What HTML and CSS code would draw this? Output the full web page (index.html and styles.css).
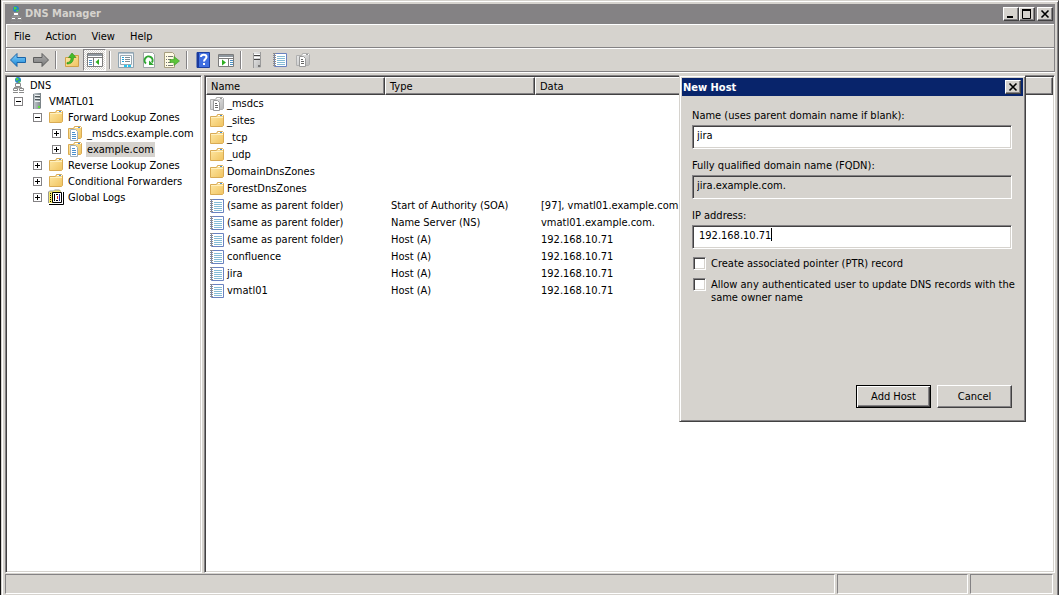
FILE: index.html
```html
<!DOCTYPE html>
<html lang="en">
<head>
    <meta charset="UTF-8">
    <meta name="viewport" content="width=device-width, initial-scale=1.0">
    <title>DNS Manager</title>
    <link rel="stylesheet" href="styles.css">
</head>
<body>
    <!-- Icon set -->
    <svg class="sprite" aria-hidden="true">
        <linearGradient id="gFolder" x1="0" y1="0" x2="1" y2="1"><stop offset="0" stop-color="#ffe9a6"/><stop offset="1" stop-color="#f0c35f"/></linearGradient>
        <linearGradient id="gGray" x1="0" y1="0" x2="1" y2="1"><stop offset="0" stop-color="#ededed"/><stop offset="1" stop-color="#b8b8b8"/></linearGradient>
        <linearGradient id="gBlue" x1="0" y1="0" x2="0" y2="1"><stop offset="0" stop-color="#8ad4fb"/><stop offset="1" stop-color="#1583d6"/></linearGradient>
        <linearGradient id="gArrow" x1="0" y1="0" x2="0" y2="1"><stop offset="0" stop-color="#b0b0b0"/><stop offset="1" stop-color="#777"/></linearGradient>
        <linearGradient id="gServer" x1="0" y1="0" x2="1" y2="0"><stop offset="0" stop-color="#c9d0d4"/><stop offset="1" stop-color="#7d878c"/></linearGradient>

        <symbol id="dns" viewBox="0 0 16 16">
            <circle cx="8" cy="3" r="3" fill="#2585c9"/>
            <path d="M6 1h2l1 1.500-3 1.500zM8 4.500l2.500-1v1.500L8.500 6z" fill="#4fd03e"/>
            <path d="M8 5.500v6" stroke="#888"/>
            <path d="M5.500 6.500h5v3h-5z" fill="#fff" stroke="#8a8a8a"/>
            <path d="M4 10.500h8" stroke="#999"/>
            <path d="M3.500 11.500h4v2h-4zM9.500 11.500h4v2h-4z" fill="#fff" stroke="#8a8a8a"/>
            <path d="M3 15.500h5M9 15.500h5" stroke="#8a8a8a"/>
        </symbol>
        <symbol id="server" viewBox="0 0 16 16">
            <path d="M4 1l2-1h6v15l-1 1H4z" fill="url(#gServer)"/>
            <path d="M4.500 1v15M11.500 0v15" stroke="#7b8488"/>
            <path d="M6 3.500h5M6 6.500h5" stroke="#4c5559"/>
            <path d="M6 2.500h5M6 5.500h5M6 8.500h5" stroke="#eef2f3"/>
            <path d="M9 13h2v2H9z" fill="#5fe33c"/>
        </symbol>
        <symbol id="server-gray" viewBox="0 0 16 16">
            <path d="M4 1l2-1h6v15l-1 1H4z" fill="url(#gGray)"/>
            <path d="M4.500 1v15M11.500 0v15" stroke="#9a9a9a"/>
            <path d="M5 3.500h6M5 7.500h6" stroke="#444"/>
            <path d="M5 2.500h6M5 5.500h6" stroke="#fff"/>
            <path d="M9 13h2v2H9z" fill="#777"/>
        </symbol>
        <symbol id="folder" viewBox="0 0 16 16">
            <path d="M1.500 3.500h6l1-2h5l1 1v10l-1 1h-12z" fill="url(#gFolder)" stroke="#d9ab54"/>
            <path d="M9 2.500h5" stroke="#fff"/><path d="M11 2.500h2" stroke="#4a90dc"/>
            <path d="M2 4.500h12" stroke="#fff0c0"/>
        </symbol>
        <symbol id="zone" viewBox="0 0 16 16">
            <path d="M1.500 3.500h5l1-2h6l1 1v10l-1 1h-12z" fill="url(#gFolder)" stroke="#d9ab54"/>
            <path d="M8 2.500h6" stroke="#fff"/><path d="M11 2.500h2" stroke="#4a90dc"/>
            <path d="M3.500 4.500h5l2 2v9h-7z" fill="#fff" stroke="#9fb0bd"/>
            <path d="M5 7.500h3M5 9.500h4M5 11.500h4M5 13.500h4" stroke="#4a8fce"/>
        </symbol>
        <symbol id="zone-gray" viewBox="0 0 16 16">
            <path d="M1.500 3.500h5l1-2h6l1 1v10l-1 1h-12z" fill="url(#gGray)" stroke="#b0b0b0"/>
            <path d="M8 2.500h6" stroke="#fff"/><path d="M11 2.500h2" stroke="#999"/>
            <path d="M4.500 4.500h4l2 2v8h-6z" fill="#fff" stroke="#999"/>
            <path d="M6 7.500h2M6 9.500h3M6 11.500h3" stroke="#666"/>
        </symbol>
        <symbol id="record" viewBox="0 0 16 16">
            <path d="M2.500 1.500h12v13h-12z" fill="#fff" stroke="#6a82c0"/>
            <path d="M5 4.500h8M5 6.500h8M5 8.500h8M5 10.500h8M5 12.500h8" stroke="#86bcd6"/>
            <path d="M2.500 1v14" stroke="#8c8c8c" stroke-width="3" stroke-dasharray="1 1"/>
        </symbol>
        <symbol id="logs" viewBox="0 0 16 16">
            <path d="M1 3l1-1h4l1-1h5l1 2v11H1z" fill="#f6e96a"/>
            <path d="M.5 14v-11l1-1h4l1-1h5l1 1.500" fill="none" stroke="#999"/>
            <path d="M1 15.500h14.500V3" fill="none" stroke="#000"/>
            <path d="M4.500 3.500h9v10h-9z" fill="#fff" stroke="#000"/>
            <path d="M6.500 5v7M8 5.500h2M8 11.500h2" stroke="#000"/>
            <path d="M9.500 7v3" stroke="#c22"/><path d="M11.500 5v7" stroke="#22a"/>
            <path d="M2.500 4v10" stroke="#000" stroke-dasharray="1 1"/>
        </symbol>
        <symbol id="back" viewBox="0 0 16 16">
            <path d="M.5 8L7 1.500v4h8.500v5H7v4z" fill="url(#gBlue)" stroke="#1c65a8"/>
        </symbol>
        <symbol id="forward" viewBox="0 0 16 16">
            <path d="M15.500 8L9 1.500v4H.5v5H9v4z" fill="url(#gArrow)" stroke="#5d5d5d"/>
        </symbol>
        <symbol id="up" viewBox="0 0 16 16">
            <path d="M1.500 5.500h6l1-2h6v11h-13z" fill="url(#gFolder)" stroke="#d0a048"/>
            <path d="M3 10.500c3 0 4-2 4-5H4.500L8 1l4 4.500H9.500C9.500 10 7 12 3 12z" fill="#43bd2a" stroke="#258b16" stroke-width=".6"/>
        </symbol>
        <symbol id="panes" viewBox="0 0 16 16">
            <path d="M.5 1.500h15v13H.5z" fill="#fff" stroke="#7c7c7c"/>
            <path d="M1 3h14" stroke="#8e979e" stroke-width="2"/><path d="M1 5.500h14M6.500 6v8" stroke="#7c7c7c"/>
            <path d="M2 8.500h3M2 10.500h3M2 12.500h3" stroke="#4b91c4"/>
            <path d="M12 7v6L8.500 10z" fill="#2fae20"/>
        </symbol>
        <symbol id="props" viewBox="0 0 16 16">
            <path d="M.5.500h15v15H.5z" fill="#f5f8fa" stroke="#8fa3b0"/>
            <path d="M1 1.500h14" stroke="#b5c5d1"/>
            <path d="M2.500 3.500h11v9h-11z" fill="#fff" stroke="#9baab3"/>
            <path d="M7 5.500h5M7 7.500h5M7 9.500h5" stroke="#7c8b93"/><path d="M4 5.500h2M4 7.500h2M4 9.500h2" stroke="#22a3dc"/>
            <path d="M6 14h3M10 14h3" stroke="#28c5ee" stroke-width="2"/>
        </symbol>
        <symbol id="refresh" viewBox="0 0 16 16">
            <path d="M2.500.500h9l2 2v13h-11z" fill="#fff" stroke="#a1a5a8"/>
            <path d="M5 11.500A4 4 0 1 1 11 10.500" fill="none" stroke="#30a632" stroke-width="2"/>
            <path d="M8 8.500v4.500h5z" fill="#30a632"/>
        </symbol>
        <symbol id="export" viewBox="0 0 16 16">
            <path d="M.5.500h8l2 2v13H.5z" fill="#fffbe4" stroke="#a79f80"/>
            <path d="M2 4.500h1M4 4.500h5M2 7.500h1M4 7.500h3M2 10.500h1M4 10.500h3M2 13.500h1M4 13.500h5" stroke="#777"/>
            <path d="M6 7.500h4V4.500L15.500 9 10 13.500v-3H6z" fill="#5cc43a" stroke="#3b9323" stroke-width=".6"/>
        </symbol>
        <symbol id="help" viewBox="0 0 16 16">
            <path d="M2 .5h12.500v15H2z" fill="#3f6fe0" stroke="#1b3fa0"/><path d="M3 1v14" stroke="#1c3a9c" stroke-width="2"/>
            <path d="M6 5c0-3 5.500-3 5.500 0 0 2-2.500 2-2.500 4.500" fill="none" stroke="#fff" stroke-width="2"/>
            <path d="M8 11h2v2H8z" fill="#fff"/>
        </symbol>
        <symbol id="action" viewBox="0 0 16 16">
            <path d="M.5 2.500h15v12H.5z" fill="#fff" stroke="#7c7c7c"/>
            <path d="M1 4h14" stroke="#8e979e" stroke-width="2"/><path d="M1 6.500h14M10.500 7v7" stroke="#7c7c7c"/>
            <path d="M12 8.500h3M12 10.500h3M12 12.500h3" stroke="#4b91c4"/>
            <path d="M4 7.500v6L8 10.500z" fill="#2fae20"/>
        </symbol>
        <symbol id="min" viewBox="0 0 12 10"><path d="M2 8h6" stroke="#000" stroke-width="2"/></symbol>
        <symbol id="max" viewBox="0 0 12 10"><path d="M1.500 1h8v8.500h-8z" fill="none" stroke="#000"/><path d="M1 1h9" stroke="#000" stroke-width="2"/></symbol>
        <symbol id="close" viewBox="0 0 12 10"><path d="M2.500 1.500l7 7M9.500 1.500l-7 7" stroke="#000" stroke-width="1.600"/></symbol>
    </svg>

    <div class="window">
        <header class="titlebar">
            <svg class="icon"><use href="#dns"/></svg>
            <h1>DNS Manager</h1>
            <div class="caption-buttons">
                <button class="caption" aria-label="Minimize"><svg><use href="#min"/></svg></button>
                <button class="caption" aria-label="Maximize"><svg><use href="#max"/></svg></button>
                <button class="caption close" aria-label="Close"><svg><use href="#close"/></svg></button>
            </div>
        </header>

        <div class="bars">
            <nav class="menubar">
                <button>File</button>
                <button>Action</button>
                <button>View</button>
                <button>Help</button>
            </nav>
            <div class="toolbar">
                <button aria-label="Back"><svg class="icon"><use href="#back"/></svg></button>
                <button aria-label="Forward"><svg class="icon"><use href="#forward"/></svg></button>
                <span class="sep"></span>
                <button aria-label="Up one level"><svg class="icon"><use href="#up"/></svg></button>
                <button class="pressed" aria-label="Show console tree"><svg class="icon"><use href="#panes"/></svg></button>
                <span class="sep"></span>
                <button aria-label="Properties"><svg class="icon"><use href="#props"/></svg></button>
                <button aria-label="Refresh"><svg class="icon"><use href="#refresh"/></svg></button>
                <button aria-label="Export list"><svg class="icon"><use href="#export"/></svg></button>
                <span class="sep"></span>
                <button aria-label="Help"><svg class="icon"><use href="#help"/></svg></button>
                <button aria-label="Show action pane"><svg class="icon"><use href="#action"/></svg></button>
                <span class="sep"></span>
                <button aria-label="New server"><svg class="icon"><use href="#server-gray"/></svg></button>
                <button aria-label="New record"><svg class="icon"><use href="#record"/></svg></button>
                <button aria-label="New zone"><svg class="icon"><use href="#zone-gray"/></svg></button>
            </div>
        </div>

        <main class="panes">
            <!-- Console tree -->
            <div class="pane tree">
                <div class="node"><svg class="icon"><use href="#dns"/></svg><span>DNS</span></div>
                <ul>
                    <li>
                        <div class="node"><button class="toggle open" aria-label="Collapse"></button><svg class="icon"><use href="#server"/></svg><span>VMATL01</span></div>
                        <ul>
                            <li>
                                <div class="node"><button class="toggle open" aria-label="Collapse"></button><svg class="icon"><use href="#folder"/></svg><span>Forward Lookup Zones</span></div>
                                <ul>
                                    <li class="node"><button class="toggle" aria-label="Expand"></button><svg class="icon"><use href="#zone"/></svg><span>_msdcs.example.com</span></li>
                                    <li class="node"><button class="toggle" aria-label="Expand"></button><svg class="icon"><use href="#zone"/></svg><span class="selected">example.com</span></li>
                                </ul>
                            </li>
                            <li class="node"><button class="toggle" aria-label="Expand"></button><svg class="icon"><use href="#folder"/></svg><span>Reverse Lookup Zones</span></li>
                            <li class="node"><button class="toggle" aria-label="Expand"></button><svg class="icon"><use href="#folder"/></svg><span>Conditional Forwarders</span></li>
                            <li class="node"><button class="toggle" aria-label="Expand"></button><svg class="icon"><use href="#logs"/></svg><span>Global Logs</span></li>
                        </ul>
                    </li>
                </ul>
            </div>

            <!-- Records -->
            <div class="pane list">
                <table>
                    <thead>
                        <tr><th class="col-name">Name</th><th class="col-type">Type</th><th>Data</th></tr>
                    </thead>
                    <tbody>
                        <tr><td><svg class="icon"><use href="#zone-gray"/></svg>_msdcs</td><td></td><td></td></tr>
                        <tr><td><svg class="icon"><use href="#folder"/></svg>_sites</td><td></td><td></td></tr>
                        <tr><td><svg class="icon"><use href="#folder"/></svg>_tcp</td><td></td><td></td></tr>
                        <tr><td><svg class="icon"><use href="#folder"/></svg>_udp</td><td></td><td></td></tr>
                        <tr><td><svg class="icon"><use href="#folder"/></svg>DomainDnsZones</td><td></td><td></td></tr>
                        <tr><td><svg class="icon"><use href="#folder"/></svg>ForestDnsZones</td><td></td><td></td></tr>
                        <tr><td><svg class="icon"><use href="#record"/></svg>(same as parent folder)</td><td>Start of Authority (SOA)</td><td>[97], vmatl01.example.com..</td></tr>
                        <tr><td><svg class="icon"><use href="#record"/></svg>(same as parent folder)</td><td>Name Server (NS)</td><td>vmatl01.example.com.</td></tr>
                        <tr><td><svg class="icon"><use href="#record"/></svg>(same as parent folder)</td><td>Host (A)</td><td>192.168.10.71</td></tr>
                        <tr><td><svg class="icon"><use href="#record"/></svg>confluence</td><td>Host (A)</td><td>192.168.10.71</td></tr>
                        <tr><td><svg class="icon"><use href="#record"/></svg>jira</td><td>Host (A)</td><td>192.168.10.71</td></tr>
                        <tr><td><svg class="icon"><use href="#record"/></svg>vmatl01</td><td>Host (A)</td><td>192.168.10.71</td></tr>
                    </tbody>
                </table>
            </div>
        </main>

        <footer class="statusbar">
            <div class="cell main-cell"></div>
            <div class="cell mid-cell"></div>
            <div class="cell end-cell"></div>
        </footer>

        <!-- New Host dialog -->
        <form class="dialog" role="dialog" aria-labelledby="dialogTitle">
            <div class="dialog-title">
                <h2 id="dialogTitle">New Host</h2>
                <button type="button" class="caption" aria-label="Close"><svg><use href="#close"/></svg></button>
            </div>
            <div class="dialog-body">
                <label for="hostName">Name (uses parent domain name if blank):</label>
                <input type="text" id="hostName" value="jira">
                <label for="fqdn">Fully qualified domain name (FQDN):</label>
                <input type="text" id="fqdn" value="jira.example.com." readonly>
                <label for="ip">IP address:</label>
                <div class="ip-field">
                    <input type="text" id="ip" value="192.168.10.71">
                    <span class="caret"></span>
                </div>
                <div class="check">
                    <input type="checkbox" id="ptr">
                    <label for="ptr">Create associated pointer (PTR) record</label>
                </div>
                <div class="check">
                    <input type="checkbox" id="allow">
                    <label for="allow">Allow any authenticated user to update DNS records with the same owner name</label>
                </div>
                <div class="actions">
                    <button type="button" class="btn default">Add Host</button>
                    <button type="button" class="btn">Cancel</button>
                </div>
            </div>
        </form>
    </div>
</body>
</html>
```

FILE: styles.css
```css
* { box-sizing: border-box; }
body { margin: 0; padding-left: 1px; background: #111; color: #000; font: 11px/13px "DejaVu Sans Condensed", "DejaVu Sans", sans-serif; }
button, input { font: inherit; color: inherit; margin: 0; border-radius: 0; }
h1, h2 { margin: 0; font-size: 11px; line-height: 13px; }
ul { list-style: none; margin: 0; padding: 0; }
.sprite { position: absolute; width: 0; height: 0; }
.icon { width: 16px; height: 16px; flex: none; display: block; }

.window { position: relative; display: flex; flex-direction: column; min-height: 100vh; padding: 3px 3px 1px; background: #d6d3ce; border: 1px solid #d6d3ce; border-right-color: #424142; border-bottom: 0; box-shadow: inset 1px 1px #fff, inset -1px 0 #848284; }

/* Title bar */
.titlebar { display: flex; align-items: center; height: 19px; padding: 0 2px 0 3px; background: #848284; color: #d6d3ce; }
.titlebar h1 { flex: 1; margin-left: 1px; }
.caption-buttons { display: flex; }
.caption { width: 16px; height: 14px; padding: 0; background: #d6d3ce; border: 1px solid; border-color: #fff #424142 #424142 #fff; box-shadow: inset -1px -1px #848284; }
.caption svg { display: block; width: 12px; height: 10px; margin: 0 auto; }
.caption.close { margin-left: 2px; }

/* Menu and toolbar */
.bars { margin-bottom: 3px; padding-top: 1px; border: 1px solid #848284; box-shadow: inset 1px 1px #fff, 0 1px #fff; }
.menubar { display: flex; height: 23px; padding-left: 1px; border-bottom: 1px solid #848284; }
.menubar button { padding: 0 7px; margin-right: 1px; border: 0; background: none; }
.toolbar { display: flex; height: 23px; border-top: 1px solid #fff; }
.toolbar button { display: flex; justify-content: center; align-items: center; width: 23px; height: 22px; padding: 0; border: 0; background: none; }
.toolbar .pressed { border: 1px solid; border-color: #848284 #fff #fff #848284; background: repeating-conic-gradient(#fff 0 25%, #d6d3ce 0 50%) 0 0 / 2px 2px; }
.sep { width: 2px; height: 18px; margin: 2px 3px; border-left: 1px solid #848284; border-right: 1px solid #fff; }

/* Panes */
.panes { flex: 1; display: flex; gap: 2px; }
.pane { padding: 1px; background: #fff; border: 1px solid; border-color: #848284 #fff #fff #848284; box-shadow: inset 1px 1px #424142, inset -1px -1px #d6d3ce; }
.tree { width: 197px; padding-left: 4px; }
.tree ul { padding-left: 19px; }
.tree > ul { padding-left: 4px; }
.node { display: flex; align-items: center; height: 16px; white-space: nowrap; }
.node span { margin-left: 3px; padding: 1px; }
.node .selected { background: #d6d3ce; }
.toggle { width: 9px; height: 9px; margin-right: 6px; padding: 0; border: 1px solid #848284; background: linear-gradient(#000, #000) center / 5px 1px no-repeat, linear-gradient(#000, #000) center / 1px 5px no-repeat #fff; }
.toggle.open { background: linear-gradient(#000, #000) center / 5px 1px no-repeat #fff; }

.list { flex: 1; min-width: 0; }
table { width: 100%; table-layout: fixed; border-collapse: separate; border-spacing: 0; }
th { height: 18px; padding: 0 4px; text-align: left; font-weight: normal; background: #d6d3ce; border: 1px solid; border-color: #fff #424142 #424142 #fff; box-shadow: inset -1px -1px #848284; }
.col-name { width: 179px; }
.col-type { width: 150px; }
td { height: 17px; padding: 0 6px; white-space: nowrap; }
td:first-child { display: flex; align-items: center; gap: 2px; padding-left: 3px; }

/* Status bar */
.statusbar { display: flex; gap: 2px; height: 20px; margin: 1px 2px 0 0; }
.cell { border: 1px solid; border-color: #848284 #fff #fff #848284; }
.main-cell { flex: 1; }
.mid-cell { width: 131px; }
.end-cell { width: 83px; }

/* New Host dialog */
.dialog { position: absolute; top: 74px; right: 32px; width: 347px; padding: 2px; background: #d6d3ce; border: 1px solid; border-color: #d6d3ce #424142 #424142 #d6d3ce; box-shadow: inset 1px 1px #fff, inset -1px -1px #848284; }
.dialog-title { display: flex; align-items: center; justify-content: space-between; height: 18px; padding: 0 2px 0 1px; background: #08246b; color: #fff; }
.dialog-body { display: flex; flex-direction: column; padding: 13px 11px 11px 10px; }
.dialog-body input[type="text"] { width: 100%; height: 24px; margin: 3px 0 10px; padding: 0 4px 3px; outline: 0; background: #fff; border: 1px solid; border-color: #848284 #fff #fff #848284; box-shadow: inset 1px 1px #424142, inset -1px -1px #d6d3ce; }
.dialog-body input[readonly] { background: #d6d3ce; }
.ip-field { position: relative; }
.dialog-body .ip-field input { padding-left: 6px; margin-bottom: 8px; }
.caret { position: absolute; left: 79px; top: 6px; width: 1px; height: 13px; background: #000; }
.check { display: flex; gap: 5px; margin: 0 -8px 8px 1px; }
.check input { appearance: none; flex: none; width: 13px; height: 13px; background: #fff; border: 1px solid; border-color: #848284 #fff #fff #848284; box-shadow: inset 1px 1px #424142, inset -1px -1px #d6d3ce; }
.actions { display: flex; justify-content: flex-end; gap: 6px; margin-top: 73px; }
.btn { width: 75px; height: 23px; padding: 0; background: #d6d3ce; border: 1px solid; border-color: #fff #424142 #424142 #fff; box-shadow: inset -1px -1px #848284; }
.btn.default { border-color: #000; box-shadow: inset 1px 1px #fff, inset -1px -1px #424142, inset -2px -2px #848284; }
```
